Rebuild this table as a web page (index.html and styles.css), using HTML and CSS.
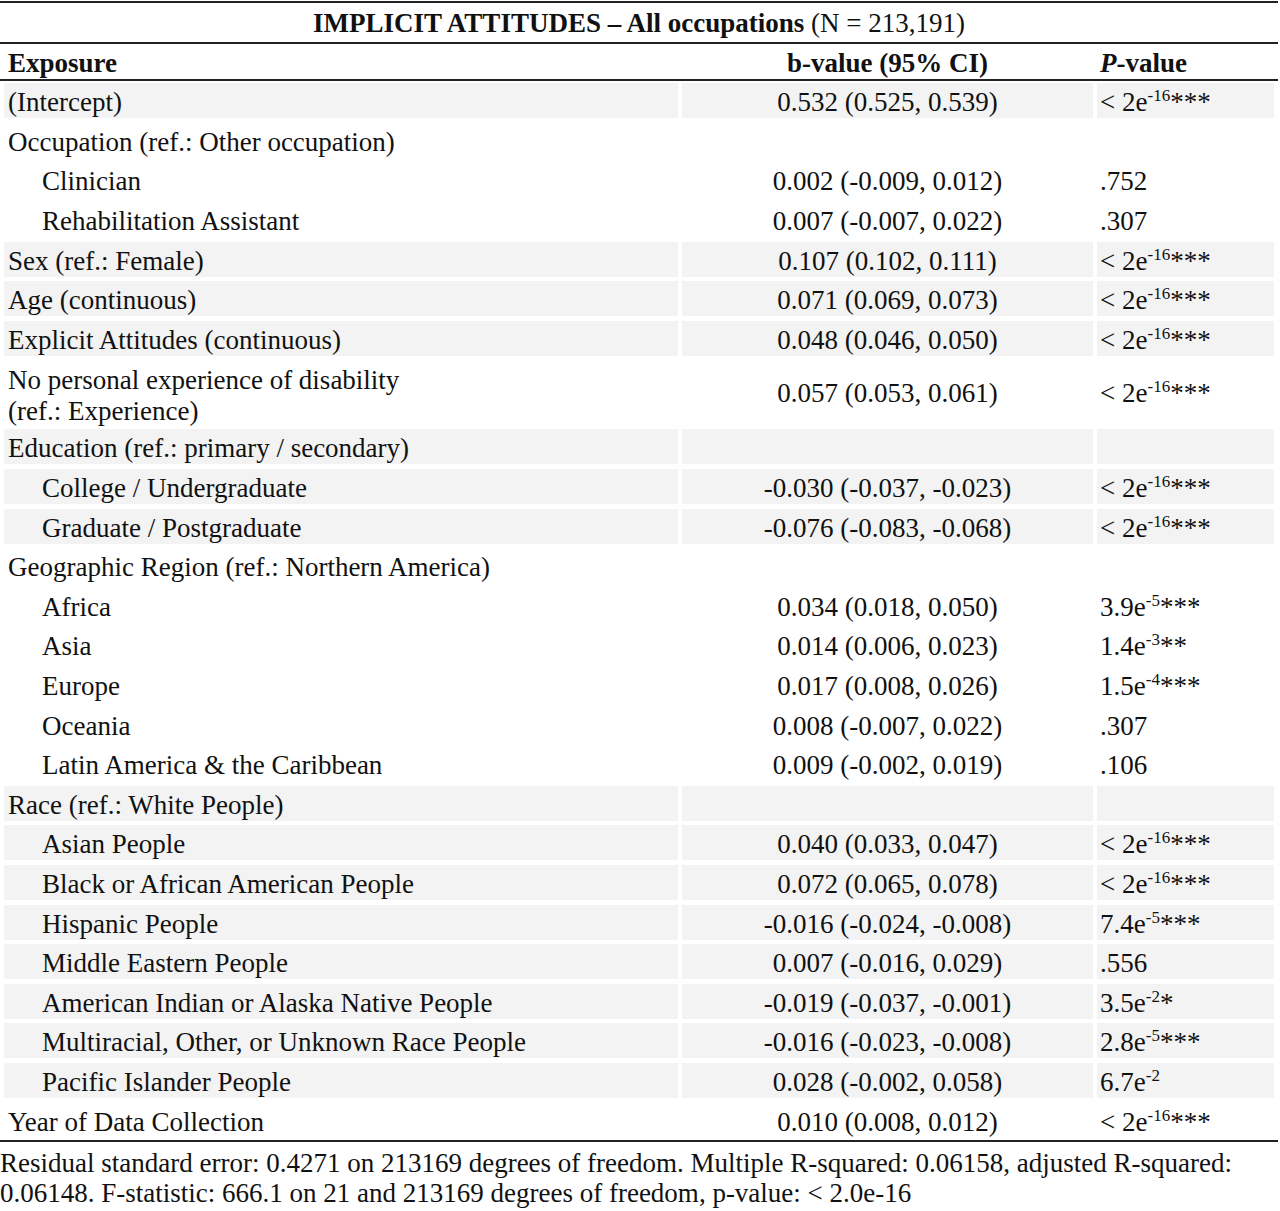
FILE: index.html
```html
<!DOCTYPE html>
<html lang="en">
<head>
  <meta charset="UTF-8">
  <title>Implicit Attitudes - All occupations</title>
  <link rel="stylesheet" href="styles.css">
</head>
<body>
  <div class="table">
    <div class="title-row"><b>IMPLICIT ATTITUDES – All occupations</b> (N = 213,191)</div>

    <div class="row head">
      <div class="cell">Exposure</div>
      <div class="cell num">b-value (95% CI)</div>
      <div class="cell p"><i>P</i>-value</div>
    </div>

    <div class="body">
      <div class="row shade">
        <div class="cell">(Intercept)</div>
        <div class="cell num">0.532 (0.525, 0.539)</div>
        <div class="cell p">&lt; 2e<sup>-16</sup>***</div>
      </div>
      <div class="row">
        <div class="cell">Occupation (ref.: Other occupation)</div>
        <div class="cell num"></div>
        <div class="cell p"></div>
      </div>
      <div class="row">
        <div class="cell sub">Clinician</div>
        <div class="cell num">0.002 (-0.009, 0.012)</div>
        <div class="cell p">.752</div>
      </div>
      <div class="row">
        <div class="cell sub">Rehabilitation Assistant</div>
        <div class="cell num">0.007 (-0.007, 0.022)</div>
        <div class="cell p">.307</div>
      </div>
      <div class="row shade">
        <div class="cell">Sex (ref.: Female)</div>
        <div class="cell num">0.107 (0.102, 0.111)</div>
        <div class="cell p">&lt; 2e<sup>-16</sup>***</div>
      </div>
      <div class="row shade">
        <div class="cell">Age (continuous)</div>
        <div class="cell num">0.071 (0.069, 0.073)</div>
        <div class="cell p">&lt; 2e<sup>-16</sup>***</div>
      </div>
      <div class="row shade">
        <div class="cell">Explicit Attitudes (continuous)</div>
        <div class="cell num">0.048 (0.046, 0.050)</div>
        <div class="cell p">&lt; 2e<sup>-16</sup>***</div>
      </div>
      <div class="row tall">
        <div class="cell">No personal experience of disability<br>(ref.: Experience)</div>
        <div class="cell num">0.057 (0.053, 0.061)</div>
        <div class="cell p">&lt; 2e<sup>-16</sup>***</div>
      </div>
      <div class="row shade">
        <div class="cell">Education (ref.: primary / secondary)</div>
        <div class="cell num"></div>
        <div class="cell p"></div>
      </div>
      <div class="row shade">
        <div class="cell sub">College / Undergraduate</div>
        <div class="cell num">-0.030 (-0.037, -0.023)</div>
        <div class="cell p">&lt; 2e<sup>-16</sup>***</div>
      </div>
      <div class="row shade">
        <div class="cell sub">Graduate / Postgraduate</div>
        <div class="cell num">-0.076 (-0.083, -0.068)</div>
        <div class="cell p">&lt; 2e<sup>-16</sup>***</div>
      </div>
      <div class="row">
        <div class="cell">Geographic Region (ref.: Northern America)</div>
        <div class="cell num"></div>
        <div class="cell p"></div>
      </div>
      <div class="row">
        <div class="cell sub">Africa</div>
        <div class="cell num">0.034 (0.018, 0.050)</div>
        <div class="cell p">3.9e<sup>-5</sup>***</div>
      </div>
      <div class="row">
        <div class="cell sub">Asia</div>
        <div class="cell num">0.014 (0.006, 0.023)</div>
        <div class="cell p">1.4e<sup>-3</sup>**</div>
      </div>
      <div class="row">
        <div class="cell sub">Europe</div>
        <div class="cell num">0.017 (0.008, 0.026)</div>
        <div class="cell p">1.5e<sup>-4</sup>***</div>
      </div>
      <div class="row">
        <div class="cell sub">Oceania</div>
        <div class="cell num">0.008 (-0.007, 0.022)</div>
        <div class="cell p">.307</div>
      </div>
      <div class="row">
        <div class="cell sub">Latin America &amp; the Caribbean</div>
        <div class="cell num">0.009 (-0.002, 0.019)</div>
        <div class="cell p">.106</div>
      </div>
      <div class="row shade">
        <div class="cell">Race (ref.: White People)</div>
        <div class="cell num"></div>
        <div class="cell p"></div>
      </div>
      <div class="row shade">
        <div class="cell sub">Asian People</div>
        <div class="cell num">0.040 (0.033, 0.047)</div>
        <div class="cell p">&lt; 2e<sup>-16</sup>***</div>
      </div>
      <div class="row shade">
        <div class="cell sub">Black or African American People</div>
        <div class="cell num">0.072 (0.065, 0.078)</div>
        <div class="cell p">&lt; 2e<sup>-16</sup>***</div>
      </div>
      <div class="row shade">
        <div class="cell sub">Hispanic People</div>
        <div class="cell num">-0.016 (-0.024, -0.008)</div>
        <div class="cell p">7.4e<sup>-5</sup>***</div>
      </div>
      <div class="row shade">
        <div class="cell sub">Middle Eastern People</div>
        <div class="cell num">0.007 (-0.016, 0.029)</div>
        <div class="cell p">.556</div>
      </div>
      <div class="row shade">
        <div class="cell sub">American Indian or Alaska Native People</div>
        <div class="cell num">-0.019 (-0.037, -0.001)</div>
        <div class="cell p">3.5e<sup>-2</sup>*</div>
      </div>
      <div class="row shade">
        <div class="cell sub">Multiracial, Other, or Unknown Race People</div>
        <div class="cell num">-0.016 (-0.023, -0.008)</div>
        <div class="cell p">2.8e<sup>-5</sup>***</div>
      </div>
      <div class="row shade">
        <div class="cell sub">Pacific Islander People</div>
        <div class="cell num">0.028 (-0.002, 0.058)</div>
        <div class="cell p">6.7e<sup>-2</sup></div>
      </div>
      <div class="row">
        <div class="cell">Year of Data Collection</div>
        <div class="cell num">0.010 (0.008, 0.012)</div>
        <div class="cell p">&lt; 2e<sup>-16</sup>***</div>
      </div>
    </div>
  </div>

  <p class="note">Residual standard error: 0.4271 on 213169 degrees of freedom. Multiple R-squared: 0.06158, adjusted R-squared:<br>0.06148. F-statistic: 666.1 on 21 and 213169 degrees of freedom, p-value: &lt; 2.0e-16</p>
</body>
</html>
```

FILE: styles.css
```css
body {
  margin: 0;
  font-family: "Liberation Serif", "Times New Roman", serif;
  font-size: 27px;
  color: #111;
  background-color: #fff;
}
.table {
  width: 1278px;
  margin-top: 1px;
  border-top: 2px solid #222;
  border-bottom: 2px solid #222;
}
.title-row {
  height: 38px;
  padding-top: 1px;
  line-height: 39px;
  text-align: center;
  border-bottom: 2px solid #222;
}
.row {
  display: grid;
  grid-template-columns: 674px 411px 177px;
  column-gap: 4px;
  padding: 2.3px 4px;
}
.row.head {
  padding: 0 4px;
  font-weight: bold;
  border-bottom: 2px solid #222;
}
.cell {
  height: 33px;
  padding: 2px 4px 0;
  line-height: 35px;
  white-space: nowrap;
}
.cell.sub {
  padding-left: 38px;
}
.cell.num {
  text-align: center;
}
.cell.p {
  padding-left: 3px;
}
.row.shade .cell {
  background-color: #f3f3f3;
}
.row.tall .cell {
  height: 64.4px;
  padding-top: 0;
  line-height: 66px;
}
.row.tall .cell:first-child {
  height: 59.4px;
  padding-top: 5px;
  line-height: 31px;
}
sup {
  font-size: 17px;
  line-height: 0;
  vertical-align: 10px;
}
.note {
  margin: 6px 0 0;
  line-height: 30px;
  white-space: nowrap;
}
```
